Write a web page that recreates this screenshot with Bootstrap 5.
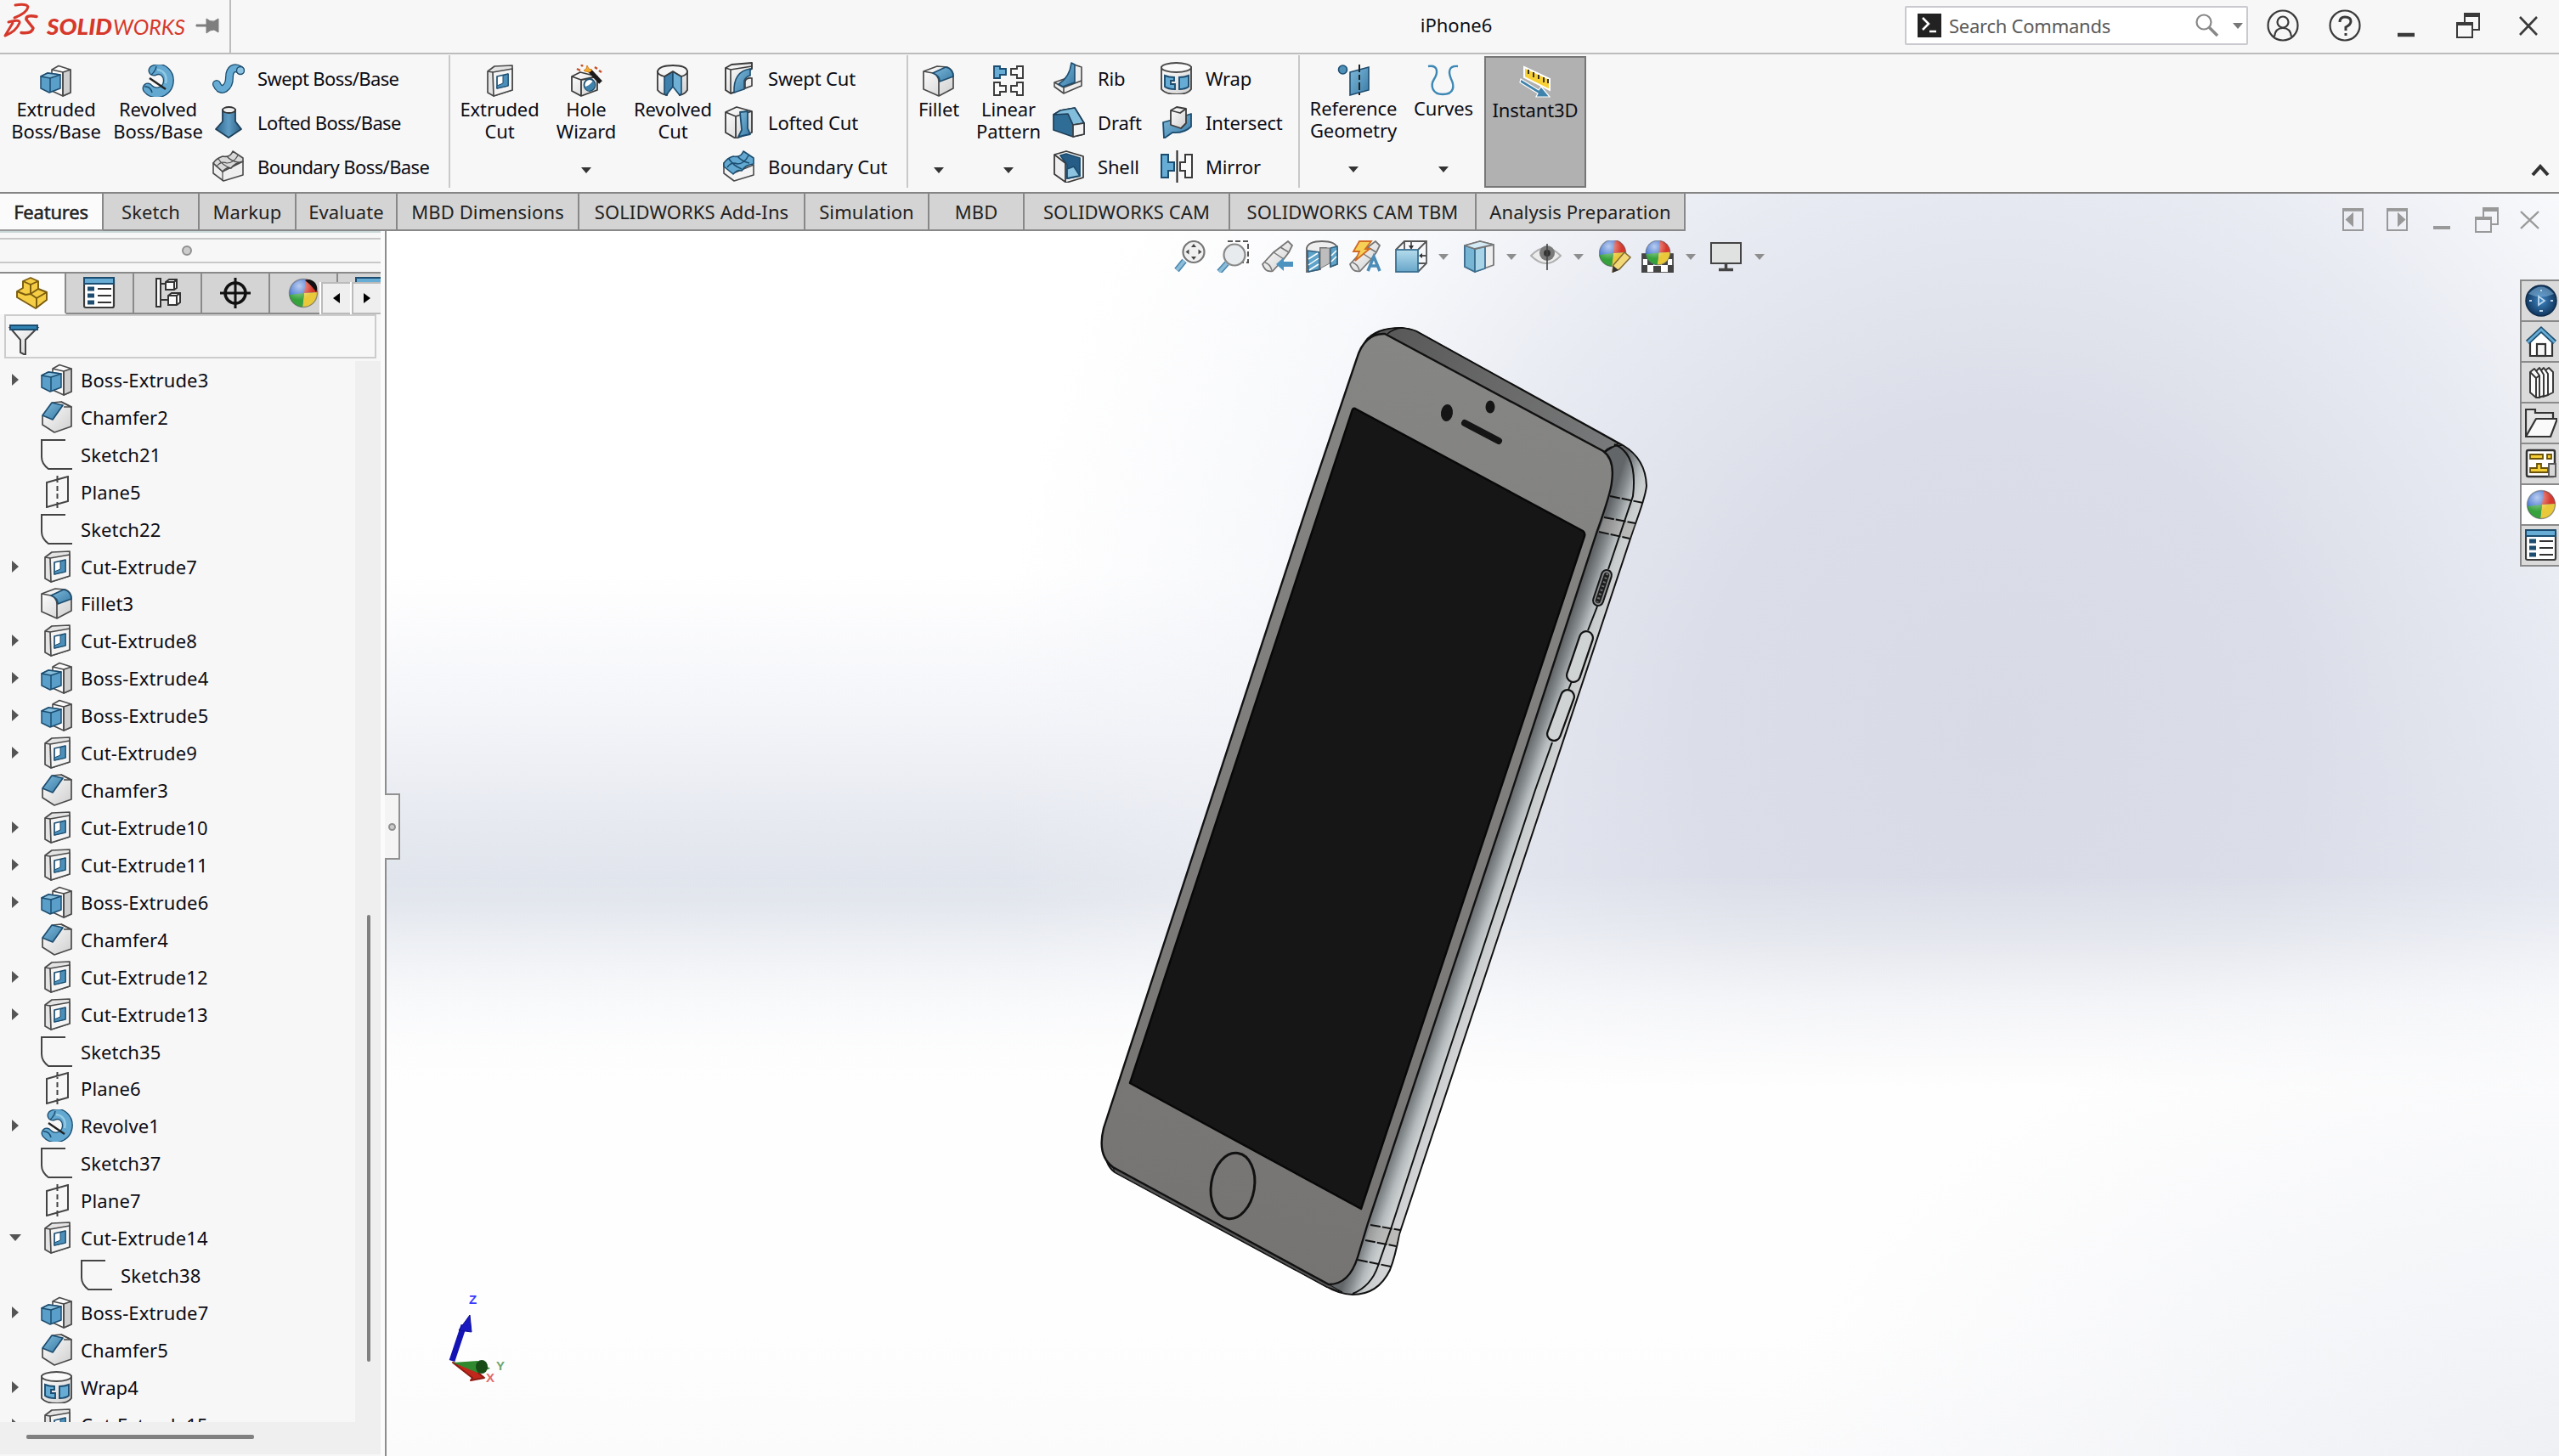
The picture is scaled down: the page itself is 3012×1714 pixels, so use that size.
<!DOCTYPE html>
<html lang="en">
<head>
<meta charset="utf-8">
<title>iPhone6 - SOLIDWORKS</title>
<link href="https://cdn.jsdelivr.net/npm/bootstrap@5.3.0/dist/css/bootstrap.min.css" rel="stylesheet">
<style>
html,body{height:100%}
body{font-family:"Noto Sans","Open Sans",sans-serif;font-size:22px;line-height:26px;color:#0c0c14;background:#f7f7f7;overflow:hidden}
svg{display:block;flex:none}
.ico{width:38px;height:38px}
.titlebar{height:64px;border-bottom:2px solid #bcbcbc;background:#f7f7f7}
.brand{width:272px;border-right:2px solid #bcbcbc}
.searchbox{width:404px;height:46px;border:2px solid #c9c9cf;background:#fff;color:#5a5a5a;border-radius:2px;letter-spacing:-.25px}
.ribbon{height:162px;background:#f7f7f7}
.rgroup{border-right:2px solid #c9c9c9;height:156px;margin-top:1px}
.big{padding-top:11px;text-align:center;white-space:nowrap;letter-spacing:-.1px}
.big .lbl{height:52px;margin-top:1px}
.big .ico{margin:0 auto}
.tri{width:0;height:0;border:6px solid transparent;border-top:7px solid #333;border-bottom:0}
.big .tri{margin:30px auto 0}
.stackcol{padding-top:1px;letter-spacing:-.15px}
.stackcol.tight{letter-spacing:-.6px}
.stackcol>div{height:52px;gap:15px;white-space:nowrap}
.stackcol span{margin-top:-1px}
.pressed{background:#b1b1b1;border:2px solid #777;height:155px;padding-top:9px;margin-top:2px;width:120px}
.workspace{height:1488px;border-top:2px solid #858585}
.cmdtabs{height:44px;position:absolute;left:0;top:0;z-index:3}
.cmdtabs>div{background:#d4d4d4;border-right:2px solid #888;border-bottom:2px solid #888;text-align:center;line-height:42px;white-space:nowrap;overflow:hidden;color:#222;letter-spacing:.12px}
.cmdtabs>.on{background:#fbfbfb;border-bottom-color:#999;-webkit-text-stroke:.5px #222;letter-spacing:-.2px}
.side{width:448px;background:#f7f7f7;margin-top:44px}
.grip{height:40px;border-top:2px solid #c9d6d8;padding-top:6px}
.grip>div{height:30px;border:2px solid #c8c8c8;border-left:0;border-right:0;padding-right:8px}
.gripgap{height:8px}
.dotg{width:12px;height:12px;border-radius:50%;border:2px solid #909090;background:#ccc}
.dotg.tiny{width:9px;height:9px}
.ptabs{height:50px;border-top:2px solid #8a8a8a}
.ptabs .pt{flex:none;width:80px;background:#d4d4d4;border-right:2px solid #8a8a8a;border-bottom:2px solid #8a8a8a;padding-top:4px}
.ptabs .pt .ico{margin:0 auto}
.ptabs .on{width:78px;background:#fcfcfc;border-bottom-color:#fcfcfc}
.arrows{right:0;bottom:0;background:#fff;padding-left:2px;width:72px;height:38px;gap:2px}
.arrows>div{flex:1;border:2px solid #bbb;border-right:0;background:#efefef}
.filterbox{height:52px;width:438px;margin-left:5px;border:2px solid #ccc;padding:8px 0 0 3px}
.treewrap{padding-top:3px}
.tree{height:1249px;width:418px;overflow:hidden;letter-spacing:.12px}
.trow{height:43.93px;white-space:nowrap}
.tw{width:48px;padding-left:14px}
.openmark{margin-left:-3px}
.trow .ico{margin-right:9px}
.child{padding-left:47px}
.vbar{width:30px;background:#efefef;padding:652px 12px 0 14px}
.vbar>div{height:526px;background:#808080;border-radius:2px}
.hbar{height:38px;background:#efefef;padding:15px 0 0 31px}
.hbar>div{width:268px;height:5px;background:#808080;border-radius:2px}
.edgebar{width:7px;background:#fbfbfb;border-right:2px solid #8d8d8d;margin-top:44px}
.viewport{background:
 radial-gradient(ellipse 1000px 620px at 2620px 1520px,rgba(236,238,243,.9),rgba(255,255,255,0) 100%),
 linear-gradient(180deg,rgba(255,255,255,0) 0,rgba(255,255,255,0) 54%,rgba(255,255,255,.3) 59%,rgba(254,254,254,.7) 64%,#fefefe 71%,#fefefe 90%,#fbfbfc 100%),
 radial-gradient(ellipse 1180px 1250px at 1900px 640px,#d8dae6 0,#dbdee8 30%,rgba(228,231,240,.85) 55%,rgba(240,242,247,.5) 75%,rgba(255,255,255,0) 100%),
 linear-gradient(180deg,#fff 0,#fff 30%,#f4f5f9 41%,#e6e9f0 50%,#dfe3eb 56%,#eceff4 65%,#fff 74%,#fff 100%)}
.float{position:absolute}
.doctitle{top:16px;left:416px}
.searchpos{left:2242px;top:7px}
.searchbox .tri{border-top-color:#777}
.winbtns{left:2660px;top:0;color:#3a3a3a}
.scene3d{left:0;top:0}
.collapse-caret{left:2978px;top:128px}
.wrapcol{left:1366px}
.hud{left:926px;top:55px}
.hud .tri{border-width:6px;border-top:7px solid #8e8e8e;border-bottom:0}
.docbtns{left:2295px;top:10px;color:#999}
.taskpane{left:2511px;top:101px;width:46px;border:2px solid #8a8a8a;border-right:0;background:#dadada}
.taskpane>div{height:48px;border-bottom:2px solid #8a8a8a;padding:4px 0 0 4px}
.taskpane>div:last-child{border-bottom:0;height:46px}
.handle{left:-2px;top:706px;width:18px;height:78px;background:#f4f4f4;border:2px solid #909090;border-left:0}
</style>
<script src="https://cdn.jsdelivr.net/npm/bootstrap@5.3.0/dist/js/bootstrap.bundle.min.js"></script>
</head>
<body>
<svg width="0" height="0" class="position-absolute">
<defs>
<linearGradient id="bl" x1="0" y1="0" x2="1" y2="1"><stop offset="0" stop-color="#7fbadb"/><stop offset="1" stop-color="#3a7ba6"/></linearGradient>
<linearGradient id="db" x1="0" y1="0" x2="1" y2="0"><stop offset="0" stop-color="#2c648d"/><stop offset=".5" stop-color="#5f9cc4"/><stop offset="1" stop-color="#2c5f86"/></linearGradient>
<linearGradient id="gr" x1="0" y1="0" x2="1" y2="1"><stop offset="0" stop-color="#fff"/><stop offset="1" stop-color="#cfcfcf"/></linearGradient>
<linearGradient id="lb" x1="0" y1="0" x2="0" y2="1"><stop offset="0" stop-color="#b5dced"/><stop offset="1" stop-color="#67a6c9"/></linearGradient>
<radialGradient id="globe"><stop offset="0" stop-color="#3f86c4"/><stop offset="1" stop-color="#12385f"/></radialGradient>
<radialGradient id="shine" cx=".35" cy=".25"><stop offset="0" stop-color="#fff" stop-opacity=".65"/><stop offset="1" stop-color="#fff" stop-opacity="0"/></radialGradient>
</defs>
<symbol id="extrude" viewBox="0 0 38 38"><g stroke="#4a4a4a" stroke-width="1.6" stroke-linejoin="round"><path d="M14 6 22 1.500 36 6V33L27 37 14 31Z" fill="#fbfbfb"/><path d="M27 9 36 6V33L27 37Z" fill="#cfcfcf"/><path d="M14 6 27 9V37" fill="none"/></g><g stroke="#1c4d70" stroke-width="1.5" stroke-linejoin="round"><path d="M1 14 9 10 24 12V28L11 33 1 28Z" fill="#5a9fc9"/><path d="M1 14 9 10 24 12 12 16Z" fill="#86bedd"/><path d="M12 16V32" fill="none"/></g></symbol>
<symbol id="cut" viewBox="0 0 38 38"><g stroke="#4a4a4a" stroke-width="1.7" stroke-linejoin="round"><path d="M5 8 13 2 34 1V30L12 37 5 33Z" fill="#e4e4e4"/><path d="M11 9 34 5V30L12 37Z" fill="#f4f4f4"/><path d="M5 8 11 9" fill="none"/><path d="M16 14 29 11V25L16 28Z" fill="#fff" stroke="#1c4d70"/><path d="M23 13 29 11V25L16 28V25L23 22Z" fill="#4b90ba" stroke="#1c4d70" stroke-width="1"/></g></symbol>
<symbol id="revolve" viewBox="0 0 38 38"><path d="M14 7C25 2 33 12 31 22 29 33 14 37 7 28" fill="none" stroke="#1c4d70" stroke-width="13" stroke-linecap="round"/><path d="M14 7C25 2 33 12 31 22 29 33 14 37 7 28" fill="none" stroke="#62a8d0" stroke-width="10.300" stroke-linecap="round"/><path d="M18 6C27 7 30 14 28 22" fill="none" stroke="#93c9e4" stroke-width="2.500"/><path d="M11 12Q16 8 17 2M3 26Q10 25 12 33" fill="none" stroke="#1c4d70" stroke-width="1.5"/><path d="M9 16 28 29" stroke="#222" stroke-width="2.4"/></symbol>
<symbol id="sweep" viewBox="0 0 38 38"><path d="M5 26C10 38 20 30 20 18 20 8 26 5 32 9" fill="none" stroke="#1c4d70" stroke-width="10" stroke-linecap="round"/><path d="M5 26C10 38 20 30 20 18 20 8 26 5 32 9" fill="none" stroke="#66acd4" stroke-width="7.4" stroke-linecap="round"/><circle cx="33" cy="10" r="4.5" fill="#8cc3e0" stroke="#1c4d70" stroke-width="1.4"/></symbol>
<symbol id="loft" viewBox="0 0 38 38"><path d="M12 4V18L4 27 19 37 34 27 27 18V4Z" fill="url(#db)" stroke="#1d3f58" stroke-width="1.8" stroke-linejoin="round"/><ellipse cx="19.500" cy="4.500" rx="7.500" ry="3.500" fill="#eee" stroke="#333" stroke-width="1.8"/></symbol>
<symbol id="boundary" viewBox="0 0 38 38"><g stroke="#4a4a4a" stroke-width="1.6" stroke-linejoin="round"><path d="M1 15 12 25 36 13V29L13 36 1 27Z" fill="#efefef"/><path d="M1 15Q5 9 12 7 21 9 24 1L36 9V13Q26 15 22 21 17 19 12 25Z" fill="#d9d9d9"/><path d="M12 25V36M7 10Q12 18 22 21M17 7Q22 13 31 14M5 19Q10 12 17 15 25 15 30 6" fill="none" stroke-width="1.200"/></g></symbol>
<symbol id="boundarycut" viewBox="0 0 38 38"><g stroke="#4a4a4a" stroke-width="1.6" stroke-linejoin="round"><path d="M1 15 12 27 36 17V29L13 36 1 27Z" fill="#f4f4f4"/><path d="M1 15Q5 9 12 7 21 9 24 1L36 9V16Q26 17 22 24 17 22 12 28L1 19Z" fill="#62a8d0" stroke="#1c4d70"/><path d="M7 10Q12 18 22 22M17 7Q22 13 31 15M5 20Q10 13 17 16 25 16 30 6" fill="none" stroke="#1c4d70" stroke-width="1.500"/></g></symbol>
<symbol id="hole" viewBox="0 0 38 38"><g stroke="#3b3b3b" stroke-width="1.8" stroke-linejoin="round"><path d="M2 14 12 9 32 14V30L13 37 2 31Z" fill="url(#gr)"/><path d="M2 14 13 18 32 14M13 18V37" fill="none"/></g><ellipse cx="23" cy="24" rx="6.500" ry="7" fill="#fff" stroke="#1c4d70" stroke-width="1.800"/><path d="M27 19Q22 26 17 26 19 31 23 31 29 29 29 23Z" fill="#3f82ac"/><path d="M23 7 36 21" stroke="#1b1b1b" stroke-width="5"/><path d="M20 1 22 5 26 6 23 9 18 8 16 7 19 5Z" fill="#f0ad2e" stroke="#d8811d"/><path d="M8 5 12 7M29 3 32 5M13 0 15 2M34 7 37 9" stroke="#c3502a" stroke-width="2.500"/></symbol>
<symbol id="revcut" viewBox="0 0 38 38"><path d="M1 8V30Q5 35 12 36L19 14 27 36Q33 35 36 30V8Z" fill="url(#gr)" stroke="#3b3b3b" stroke-width="1.800"/><path d="M9 14 19 8V26L11 36 9 34Z" fill="#3f7fab" stroke="#1c4d70" stroke-width="1.600"/><path d="M19 8 29 14V34L27 36 19 26Z" fill="#6fb0d6" stroke="#1c4d70" stroke-width="1.600"/><path d="M9 14Q1 12 1 8 3 1 19 1 35 1 36 8 36 12 29 14L19 8Z" fill="#f5f5f5" stroke="#3b3b3b" stroke-width="1.800"/></symbol>
<symbol id="sweptcut" viewBox="0 0 38 38"><path d="M3 7 10 3 34 1V8Q22 12 15 35L9 37 3 33Z" fill="url(#gr)" stroke="#3b3b3b" stroke-width="1.900" stroke-linejoin="round"/><path d="M3 7 9 9 34 5M9 9V37" fill="none" stroke="#3b3b3b" stroke-width="1.600"/><path d="M32 8Q12 11 13 36L25 32V22Q27 17 32 16Z" fill="url(#bl)" stroke="#1c4d70" stroke-width="1.600"/><path d="M26 31V23Q27 18 34 19V28Z" fill="#eee" stroke="#3b3b3b" stroke-width="1.600"/></symbol>
<symbol id="loftcut" viewBox="0 0 38 38"><g stroke="#3b3b3b" stroke-width="1.800" stroke-linejoin="round"><path d="M3 7 16 1 34 6V31L15 38 3 31Z" fill="url(#gr)"/><path d="M3 7 15 12 34 6M15 12V38" fill="none"/><path d="M20 7 29 6V26L32 33 18 36 22 28Z" fill="url(#bl)" stroke="#1c4d70"/></g></symbol>
<symbol id="fillet" viewBox="0 0 38 38"><g stroke="#4a4a4a" stroke-width="1.700" stroke-linejoin="round"><path d="M1 8 17 2 29 3Q36 6 36 14V28L19 37 1 29Z" fill="url(#gr)"/><path d="M1 8 12 10Q19 13 19 20V37" fill="none"/><path d="M12 10 27 3Q36 5 36 14L20 20Q20 13 12 10Z" fill="url(#bl)" stroke="#1c4d70"/></g></symbol>
<symbol id="chamfer" viewBox="0 0 38 38"><g stroke="#4a4a4a" stroke-width="1.700" stroke-linejoin="round"><path d="M2 18 14 2 24 1 36 7V30L16 37 2 28Z" fill="url(#gr)"/><path d="M24 1 36 7 27 7" fill="none"/><path d="M2 17 13 2 26 5 14 22Z" fill="url(#bl)" stroke="#1c4d70"/></g></symbol>
<symbol id="sketch" viewBox="0 0 38 38"><path d="M29 2H1V22Q1 30 9 36H37" fill="none" stroke="#444" stroke-width="2"/></symbol>
<symbol id="plane" viewBox="0 0 38 38"><path d="M7 8 32 1V30L7 37ZM19.500 0V8M19.500 12V18M19.500 21V27M19.500 31V38" fill="none" stroke="#444" stroke-width="2"/></symbol>
<symbol id="linpat" viewBox="0 0 38 38"><g fill="#fafafa" stroke="#3a3a3a" stroke-width="1.900"><path d="M2 2H9V5H16V12H9V16H2Z" fill="#66acd4" stroke="#1c4d70"/><path d="M36 2H29V5H22V12H29V16H36Z"/><path d="M2 21H9V25H16V32H9V36H2Z"/><path d="M36 21H29V25H22V32H29V36H36Z"/></g></symbol>
<symbol id="rib" viewBox="0 0 38 38"><g stroke-width="1.600" stroke-linejoin="round"><path d="M25 3 34 6V28L13 37 2 29 2 24 22 17Z" fill="#eee" stroke="#4a4a4a"/><path d="M2 24 13 30 34 22M13 30V37" fill="none" stroke="#4a4a4a"/><path d="M22 1 26 3V24L12 29 7 26Q20 18 22 1Z" fill="url(#bl)" stroke="#1c4d70"/></g></symbol>
<symbol id="draft" viewBox="0 0 38 38"><g stroke="#1d3f58" stroke-width="1.700" stroke-linejoin="round"><path d="M1 10 9 5 26 2 37 20V33L24 36 1 28Z" fill="#2f6d97"/><path d="M1 10 9 5 26 2 37 20 24 22 18 9Z" fill="#83bddc"/><path d="M24 22 37 20V33L24 36Z" fill="#f3f3f3" stroke="#3b3b3b"/></g></symbol>
<symbol id="shell" viewBox="0 0 38 38"><g stroke="#3b3b3b" stroke-width="1.800" stroke-linejoin="round"><path d="M2 5 16 1 36 7V32L16 38 2 28Z" fill="#f0f0f0"/><path d="M9 6 16 4 32 9V30L17 33V17Z" fill="#255d86" stroke="#1c4d70"/><path d="M17 33V22L25 19 32 30Z" fill="#8cc3e0" stroke="#1c4d70"/><path d="M2 5 15 15V38" fill="none"/></g></symbol>
<symbol id="wrap" viewBox="0 0 38 38"><path d="M1 6V32Q6 38 19 38 32 38 36 32V6Z" fill="url(#gr)" stroke="#4a4a4a" stroke-width="1.900"/><ellipse cx="18.500" cy="6.500" rx="17.500" ry="5.500" fill="#fafafa" stroke="#4a4a4a" stroke-width="1.900"/><path d="M5 16Q10 18 16 18V22H12V26H17V32Q9 32 5 29ZM22 18Q28 18 33 16V29Q29 32 22 32Z" fill="#66acd4" stroke="#1c4d70" stroke-width="1.900"/></symbol>
<symbol id="intersect" viewBox="0 0 38 38"><g stroke-width="1.800" stroke-linejoin="round"><path d="M3 19 14 16 36 9V24Q28 32 14 31L4 38Z" fill="url(#bl)" stroke="#1c4d70"/><path d="M12 5 19 1 30 3V20L24 26 12 22Z" fill="url(#gr)" stroke="#3b3b3b"/><path d="M12 5 23 8 30 3" fill="none" stroke="#3b3b3b"/></g></symbol>
<symbol id="mirror" viewBox="0 0 38 38"><path d="M1 5H9V14H16V24H9V32H1Z" fill="#66acd4" stroke="#1c4d70" stroke-width="2"/><path d="M37 5H29V14H23V24H29V32H37Z" fill="#fafafa" stroke="#3a3a3a" stroke-width="2"/><path d="M19.500 0V38" stroke="#222" stroke-width="2"/></symbol>
<symbol id="refgeo" viewBox="0 0 38 38"><path d="M15 10 37 4V31L15 37Z" fill="url(#bl)" stroke="#1c4d70" stroke-width="1.600"/><path d="M26 1V37" stroke="#222" stroke-width="2" stroke-dasharray="9 3 6 3"/><circle cx="6.500" cy="7" r="5" fill="#4f90b9" stroke="#1c4d70" stroke-width="1.600"/></symbol>
<symbol id="curves" viewBox="0 0 38 38"><path d="M1 3C14 1 12 12 8 18 3 26 6 36 18 36 32 36 32 26 28 18 25 11 24 2 36 3" fill="none" stroke="#3d87b5" stroke-width="2.400"/></symbol>
<symbol id="instant" viewBox="0 0 38 38"><path d="M6 2 36 16V29L6 14Z" fill="#f7d038" stroke="#fff" stroke-width="2"/><path d="M11 5V10M17 8V14M23 11V16M29 14V20M34 16V21" stroke="#222" stroke-width="1.800"/><path d="M2 16 23 29 26 25 36 37 20 37 22 33 1 20Z" fill="#3f82ac" stroke="#fff" stroke-width="1.200"/></symbol>
<symbol id="glob4" viewBox="0 0 38 38"><circle cx="19" cy="19" r="16.500" fill="#3b6fd0"/><path d="M20 19 22 2.500A16.500 16.500 0 0 1 35.500 18Z" fill="#d8382c"/><path d="M20 19 35.500 18A16.500 16.500 0 0 1 18 35.500Z" fill="#e9c93a"/><path d="M20 19 2.500 21A16.500 16.500 0 0 0 18 35.500Z" fill="#36a23c"/><circle cx="19" cy="19" r="16.500" fill="url(#shine)" stroke="#5557" stroke-width="1.500"/></symbol>
<symbol id="dispman" viewBox="0 0 38 38"><use href="#glob4"/><path d="M21 4Q27 1 33 7 37 13 34 18 30 11 21 4Z" fill="#111"/></symbol>
<symbol id="proplist" viewBox="0 0 38 38"><rect x="1" y="1" width="35" height="35" rx="2" fill="#fff" stroke="#3b3b3b" stroke-width="2.200"/><rect x="1" y="1" width="35" height="7" fill="#66acd4" stroke="#1c4d70" stroke-width="2"/><path d="M5 14H13M5 22H13M5 30H13" stroke="#1c4d70" stroke-width="5"/><path d="M17 14H33M17 22H33M17 30H33" stroke="#333" stroke-width="2"/></symbol>
<symbol id="part" viewBox="0 0 38 38"><g stroke="#7b5c10" stroke-width="1.900" stroke-linejoin="round"><path d="M1 17 8 13V5L17 1 26 5V14L36 18V27L23 37 1 24Z" fill="#f5ce45"/><path d="M8 5 17 9 26 5M17 9V20L26 14M1 17 11 21 17 20 24 25 36 18M24 25V37" fill="none"/></g></symbol>
<symbol id="config" viewBox="0 0 38 38"><g fill="#fafafa" stroke="#333" stroke-width="2"><path d="M6 2H11V35H6ZM11 8H20M11 27H22"/><path d="M17 6 21 3H30V13L27 15H17ZM20 22 24 19H34V30L30 33H20Z"/><path d="M17 6H27V15M27 6 30 3M20 22H30V33M30 22 34 19" fill="none"/></g></symbol>
<symbol id="target" viewBox="0 0 38 38"><circle cx="19" cy="19" r="12" fill="none" stroke="#111" stroke-width="3.500"/><path d="M19 1V37M1 19H37" stroke="#111" stroke-width="3"/></symbol>
<symbol id="funnel" viewBox="0 0 38 38"><path d="M2 6 14 20V35L20 38V20L34 6Z" fill="url(#gr)" stroke="#444" stroke-width="2"/><path d="M2 3H34V8H2Z" fill="#2f83b3" stroke="#1c4d70" stroke-width="2"/></symbol>
<symbol id="zoomfit" viewBox="0 0 38 38"><path d="M13 24 4 35" stroke="#4785ac" stroke-width="7"/><path d="M13 24 4 35" stroke="#8bbcd8" stroke-width="4"/><circle cx="24" cy="13.500" r="12.500" fill="#f0f0f0" stroke="#777" stroke-width="2.200"/><path d="M24 4 27 8H21ZM24 23 27 19H21ZM14.500 13.500 18.500 10.500V16.500ZM33.500 13.500 29.500 10.500V16.500Z" fill="#444"/></symbol>
<symbol id="zoomarea" viewBox="0 0 38 38"><path d="M13 1H37V26H30" fill="none" stroke="#555" stroke-width="2" stroke-dasharray="6 3"/><path d="M12 27 3 37" stroke="#4785ac" stroke-width="7"/><path d="M12 27 3 37" stroke="#8bbcd8" stroke-width="4"/><circle cx="21" cy="17" r="12.500" fill="#e7ebed" stroke="#888" stroke-width="2.200"/></symbol>
<symbol id="scope" viewBox="0 0 38 38"><path d="M1 28 14 14 22 8 31 1 36 6 32 14 26 22 13 36Q4 38 1 28Z" fill="url(#gr)" stroke="#777" stroke-width="1.800"/><path d="M14 14 26 22M22 8 32 14M4 26Q10 28 12 35" fill="none" stroke="#777" stroke-width="1.500"/></symbol>
<symbol id="prevview" viewBox="0 0 38 38"><use href="#scope"/><path d="M17 28 26 20V25H37V31H26V36Z" fill="#4c93bf"/></symbol>
<symbol id="section" viewBox="0 0 38 38"><path d="M1 9Q3 1 19 1 35 1 37 9V28L29 31V12L24 9 17 9V34L1 37Z" fill="#eee" stroke="#666" stroke-width="1.800"/><path d="M2 12 16 14V34L3 37Z M29 9 37 7V28L29 31Z" fill="#5ea3ca" stroke="#34607d" stroke-width="1.600"/><path d="M3 22 14 15M3 29 15 21M4 35 15 28M30 18 36 12M30 25 36 19" stroke="#fff" stroke-width="1.500"/><path d="M17 9H28V27L17 33Z" fill="#bdbdbd" stroke="#777"/></symbol>
<symbol id="dynamic" viewBox="0 0 38 38"><use href="#scope"/><path d="M12 1H26L19 10H24L7 24 12 13H5Z" fill="#f6cf57" stroke="#d06a24" stroke-width="1.800"/><path d="M22 36 29 19 36 36M24.500 30H34" fill="none" stroke="#4c8db8" stroke-width="3.500"/></symbol>
<symbol id="orient" viewBox="0 0 38 38"><path d="M1 11 11 1H37V27L27 37M27 11 37 1M11 1V11M11 11V1M27 27H37M19 1V9M37 18H29" fill="none" stroke="#555" stroke-width="1.800"/><path d="M19 11 16 6H22ZM28 18 32 15V21Z" fill="#333"/><rect x="1" y="11" width="26" height="26" fill="url(#lb)" stroke="#3a6f91" stroke-width="1.800"/></symbol>
<symbol id="display" viewBox="0 0 38 38"><g stroke="#777" stroke-width="1.800" stroke-linejoin="round"><path d="M2 6 20 1 36 5V29L14 37 2 31Z" fill="#eee"/><path d="M2 6 14 10V37L2 31Z" fill="#78b4d3" stroke="#3a6f91"/><path d="M14 10 26 7V33L14 37Z" fill="#a9d4e8" stroke="#3a6f91"/><path d="M2 6 20 1 36 5 14 10Z" fill="#d4eaf4"/></g></symbol>
<symbol id="eye" viewBox="0 0 38 38"><path d="M1 18Q18 0 36 18 19 36 1 18Z" fill="#ececec" stroke="#b0b0b0" stroke-width="2"/><circle cx="20" cy="15" r="9" fill="#7a7a7a"/><circle cx="20" cy="15" r="4" fill="#333"/><path d="M20 4V35" stroke="#444" stroke-width="1.600"/></symbol>
<symbol id="appear" viewBox="0 0 38 38"><use href="#glob4" x="-2" y="-3" width="36" height="36"/><path d="M17 29 30 14 37 20 24 34 16 37Z" fill="#f2d877" stroke="#7e6a3a" stroke-width="1.500"/><path d="M17 30 23 35 16 38Z" fill="#333"/></symbol>
<symbol id="scene" viewBox="0 0 38 38"><path d="M1 16H37V38H1Z" fill="#fff" stroke="#333" stroke-width="1.600"/><path d="M1 16H8V22H1ZM30 16H37V22H30ZM7 22H14V29H7ZM24 22H31V29H24ZM0 29H7V38H0ZM14 30H23V38H14ZM31 29H38V38H31Z" fill="#444"/><use href="#glob4" x="3" y="-2" width="33" height="33"/></symbol>
<symbol id="monitor" viewBox="0 0 38 38"><rect x="1" y="3" width="35" height="24" fill="#dfe2e0" stroke="#444" stroke-width="2"/><path d="M18.500 27V34M10 34.500H27" stroke="#444" stroke-width="3.500"/></symbol>
<symbol id="tglobe" viewBox="0 0 38 38"><circle cx="19" cy="19" r="18" fill="url(#globe)" stroke="#0f2d4d" stroke-width="1.500"/><path d="M4 11Q19 -6 34 11 19 18 4 11Z" fill="#8fc1e8" opacity=".5"/><path d="M16 14 23 19 16 24ZM5 19H8M30 19H33M17 31H21M18 7H20" fill="none" stroke="#bcd7ee" stroke-width="1.800"/></symbol>
<symbol id="home" viewBox="0 0 38 38"><path d="M6 18V36H32V18L19 6Z" fill="#fff" stroke="#333" stroke-width="2.200"/><rect x="14" y="22" width="10" height="14" fill="#f5f5f5" stroke="#333" stroke-width="2.200"/><path d="M3 20 19 5 35 20" fill="none" stroke="#1c4d70" stroke-width="6"/><path d="M3 20 19 5 35 20" fill="none" stroke="#66acd4" stroke-width="2.800"/></symbol>
<symbol id="books" viewBox="0 0 38 38"><g fill="#fafafa" stroke="#333" stroke-width="1.900" stroke-linejoin="round"><path d="M21 7 28 2 33 7V31L27 34Z"/><path d="M16 8 22 2 27 9V34L21 36Z"/><path d="M11 8 17 2 22 10V35L16 37Z"/><path d="M6 7 11 3 17 11V37L13 37 6 31Z"/><path d="M6 7 13 14 17 11M13 14V37" fill="none"/></g></symbol>
<symbol id="folder" viewBox="0 0 38 38"><path d="M1 35V3H12V7H33V14" fill="#e3e3e3" stroke="#333" stroke-width="2.200"/><path d="M1 35 13 14H38L30 35Z" fill="#fafafa" stroke="#333" stroke-width="2.200" stroke-linejoin="round"/></symbol>
<symbol id="palette" viewBox="0 0 38 38"><rect x="2" y="3" width="33" height="31" rx="2" fill="#fff" stroke="#333" stroke-width="2.500"/><path d="M6 8H21V13H6ZM26 8H31V13H26ZM14 19H19V24H27V29H6V24H14Z" fill="#f5cf35" stroke="#6b5309" stroke-width="1.800"/><path d="M28 34V19H36V34Z" fill="#d8d8d8" stroke="#555" stroke-width="1.800"/></symbol>
<symbol id="restore" viewBox="0 0 30 30"><path d="M11 2V1H28V20H20M11 1V12" fill="none" stroke="currentColor" stroke-width="2"/><path d="M10 3H29" stroke="currentColor" stroke-width="4"/><rect x="2" y="12" width="18" height="17" fill="none" stroke="currentColor" stroke-width="2"/><path d="M1 13H21" stroke="currentColor" stroke-width="4"/></symbol>
</svg>

<header class="titlebar d-flex align-items-stretch position-relative">
  <div class="brand">
    <svg width="270" height="62" viewBox="0 0 270 62"><g fill="none" stroke="#d6382b" stroke-linecap="round" stroke-linejoin="round"><path d="M18 6Q31 4 33 8 32 15 17 21" stroke-width="3"/><path d="M10 26Q24 22 23 27 19 37 6 42L15 27" stroke-width="3"/><path d="M43 19.500Q30 17 31 23L39 33Q38 40 25 38.500" stroke-width="3.500"/></g>
    <g fill="#d6382b" font-family="Lato,'Open Sans',sans-serif" font-size="26" font-style="italic"><text x="55" y="40.500" font-weight="900" textLength="77" lengthAdjust="spacingAndGlyphs">SOLID</text><text x="133" y="40.500" textLength="85" lengthAdjust="spacingAndGlyphs">WORKS</text></g>
    <path d="M231 29H243V22Q247 26 252 25L257 22V38L252 35Q247 35 243 39V31H231Z" fill="#7e7e7e" stroke="#7e7e7e"/></svg>
  </div>
  <div class="float doctitle end-0 text-center">iPhone6</div>
  <div class="float searchpos d-flex align-items-center">
    <div class="searchbox d-flex align-items-center ps-2">
      <svg width="30" height="30" class="ms-1"><rect x="1" y="1" width="28" height="28" fill="#222"/><path d="M7 6 14 13 7 20M15 22H23" fill="none" stroke="#fff" stroke-width="2.500"/></svg>
      <span class="ms-2">Search Commands</span>
      <svg width="28" height="28" class="ms-auto me-3"><circle cx="10" cy="10" r="8.500" fill="none" stroke="#888" stroke-width="2.200"/><path d="M16 16 26 26" stroke="#888" stroke-width="3.500"/></svg>
      <div class="tri me-1"></div>
    </div>
  </div>
  <svg class="float winbtns" width="352" height="62"><g fill="none" stroke="#3a3a3a" stroke-width="2.200"><circle cx="27" cy="30" r="17.500"/><circle cx="27" cy="26" r="6.500"/><path d="M17 43Q18 33 27 33 36 33 37 43"/><circle cx="100" cy="30" r="17.500"/><path d="M94 26Q94 20 100 20 107 20 107 25 107 29 101 32V36M101 39V42" stroke-width="3"/><path d="M162 41H182" stroke-width="4.500"/><path d="M306 20 326 41M326 20 306 41" stroke-width="2.600"/></g><use href="#restore" x="230" y="15" width="30" height="30"/></svg>
</header>

<section class="ribbon d-flex align-items-start position-relative" id="ribbon"></section>

<main class="workspace d-flex position-relative">
  <nav class="cmdtabs d-flex" id="tabs"></nav>
  <aside class="side">
    <div class="grip"><div class="d-flex justify-content-center align-items-center"><span class="dotg"></span></div></div>
    <div class="gripgap"></div>
    <div class="ptabs d-flex position-relative overflow-hidden">
      <div class="pt on"><svg class="ico"><use href="#part"/></svg></div>
      <div class="pt"><svg class="ico"><use href="#proplist"/></svg></div>
      <div class="pt"><svg class="ico"><use href="#config"/></svg></div>
      <div class="pt"><svg class="ico"><use href="#target"/></svg></div>
      <div class="pt"><svg class="ico"><use href="#dispman"/></svg></div>
      <div class="pt"><svg class="ico"><use href="#proplist"/></svg></div>
      <div class="arrows float d-flex"><div class="d-flex align-items-center justify-content-center"><svg width="8" height="12"><path d="M8 0V12L0 6Z"/></svg></div><div class="d-flex align-items-center justify-content-center"><svg width="8" height="12"><path d="M0 0V12L8 6Z"/></svg></div></div>
    </div>
    <div class="filterbox"><svg class="ico"><use href="#funnel"/></svg></div>
    <div class="treewrap d-flex"><div class="tree" id="tree"></div><div class="vbar"><div></div></div></div>
    <div class="hbar"><div></div></div>
  </aside>
  <div class="edgebar"></div>
  <section class="viewport flex-grow-1 position-relative">
    <svg class="float scene3d" width="2557" height="1486" viewBox="455 228 2557 1486">
      <defs>
        <linearGradient id="face" gradientUnits="userSpaceOnUse" x1="1740" y1="400" x2="1440" y2="1500"><stop offset="0" stop-color="#868685"/><stop offset="1" stop-color="#767472"/></linearGradient>
        <linearGradient id="rim" gradientUnits="userSpaceOnUse" x1="1752" y1="1010" x2="1790" y2="1023"><stop offset="0" stop-color="#626669"/><stop offset=".25" stop-color="#868b8e"/><stop offset=".5" stop-color="#b4babc"/><stop offset=".7" stop-color="#c9cdce"/><stop offset="1" stop-color="#d2d3d4"/></linearGradient>
        <linearGradient id="topr" gradientUnits="userSpaceOnUse" x1="1640" y1="390" x2="1910" y2="530"><stop offset="0" stop-color="#595959"/><stop offset="1" stop-color="#7a7b7c"/></linearGradient>
      </defs>
      <path d="M1607 402Q1618 386 1650 386 1660 387 1667 390L1910 524Q1937 540 1938 572 1937 584 1923 622L1647 1453Q1642 1480 1636 1495 1622 1524 1592 1524 1575 1523 1562 1515L1312 1380Q1300 1372 1299 1345L1345 1225 1607 425Z" fill="url(#rim)" stroke="#111" stroke-width="2"/>
      <path d="M1615 396Q1625 386 1650 386 1660 387 1667 390L1905 522 1888 533 1630 393Z" fill="url(#topr)" stroke="#111" stroke-width="1.500"/>
      <path d="M1310 1374 1564 1512 1580 1521 1562 1515 1312 1380Z" fill="#555" stroke="#111"/>
      <path d="M1888 609 1925 616 1918 634 1882 626ZM1613 1442 1648 1448 1643 1467 1607 1460Z" fill="#a9a8a4" opacity=".55"/>
      <g fill="none" stroke="#111" stroke-width="2">
        <path d="M1900 523Q1928 534 1922 584L1893 670M1880 714 1869 742M1852 797 1846 812M1827 874 1807 930 1699 1257 1637 1447 1622 1490Q1614 1514 1592 1523"/>
        <path d="M1895 584 1934 592M1888 609 1925 616M1882 626 1918 634M1613 1442 1648 1448M1607 1460 1643 1467M1598 1483 1637 1491" stroke-dasharray="12 2"/>
        <path d="M1633 393Q1640 387 1650 386M1888 532Q1893 525 1910 524" stroke-width="1.500"/>
      </g>
      <path d="M1630 393 1887 531Q1901 541 1897 568 1896 580 1880 625L1780 930 1610 1440 1598 1480Q1588 1512 1564 1512L1310 1374Q1291 1360 1299 1328L1540 591 1597 422Q1606 392 1630 393Z" fill="url(#face)" stroke="#111" stroke-width="2.400"/>
      <path d="M1595 481 1863 625Q1866 627 1865 631L1602 1423 1330 1275 1591 485Q1592 480 1595 481Z" fill="#161616" stroke="#080808" stroke-width="2.500" stroke-linejoin="round"/>
      <ellipse cx="1703" cy="486" rx="7" ry="10" transform="rotate(8 1703 486)" fill="#151515"/><ellipse cx="1754" cy="479" rx="5.500" ry="7.500" fill="#151515"/>
      <path d="M1724 498 1764 519" stroke="#151515" stroke-width="8" stroke-linecap="round"/>
      <ellipse cx="1451" cy="1396" rx="25.500" ry="39" transform="rotate(9 1451 1396)" fill="none" stroke="#111" stroke-width="3"/>
      <g stroke-linecap="round" fill="none"><path d="M1867 751 1852 795M1845 820 1829 864" stroke="#111" stroke-width="18"/><path d="M1867 751 1852 795M1845 820 1829 864" stroke="#d0d3d4" stroke-width="13.500"/><path d="M1891 677 1881 707" stroke="#161616" stroke-width="14"/><path d="M1891 677 1881 707" stroke="#8b8e90" stroke-width="10"/><path d="M1891 677 1881 707" stroke="#1d1d1d" stroke-width="6.500"/><path d="M1892 675 1880 709" stroke="#6c6f70" stroke-width="3" stroke-dasharray="2 3" stroke-linecap="butt"/></g>
      <g stroke-linejoin="round"><path d="M532 1602 546 1560" stroke="#1414b4" stroke-width="7"/><path d="M540 1566 553 1548 555 1568Z" fill="#1a1ac0" stroke="#0d0d94"/><path d="M533 1604 556 1622 554 1625 570 1622 556 1610Z" fill="#c0281c" stroke="#8f1b12" stroke-width="2"/><path d="M533 1604 562 1602 577 1611 562 1616Z" fill="#2f8a2f"/><ellipse cx="567" cy="1609" rx="7" ry="8" fill="#174c17"/></g>
      <g font-weight="700" font-size="15" font-family="'Liberation Sans',sans-serif"><text x="552" y="1535" fill="#3a3aff">Z</text><text x="584" y="1613" fill="#6fa86f">Y</text><text x="572" y="1627" fill="#e26a6a">X</text></g>
    </svg>
    <div class="hud float d-flex align-items-center" id="hud"></div>
    <svg class="float docbtns" width="262" height="44"><g fill="none" stroke="#999" stroke-width="2"><rect x="8" y="8" width="23" height="25"/><path d="M7 9H32" stroke-width="3.500"/><path d="M19 14V27L12 20.500Z" fill="#999"/><rect x="60" y="8" width="23" height="25"/><path d="M59 9H84" stroke-width="3.500"/><path d="M73 14V27L80 20.500Z" fill="#999"/><path d="M114 30H134" stroke-width="4"/><path d="M217 11 238 31M238 11 217 31" stroke-width="2.400"/></g><use href="#restore" x="162" y="6" width="30" height="30"/></svg>
    <div class="taskpane float">
      <div><svg class="ico"><use href="#tglobe"/></svg></div><div><svg class="ico"><use href="#home"/></svg></div><div><svg class="ico"><use href="#books"/></svg></div><div><svg class="ico"><use href="#folder"/></svg></div><div><svg class="ico"><use href="#palette"/></svg></div><div class="bg-white"><svg class="ico"><use href="#glob4"/></svg></div><div><svg class="ico"><use href="#proplist"/></svg></div>
    </div>
    <div class="handle float d-flex align-items-center justify-content-center"><span class="dotg tiny"></span></div>
  </section>
</main>
<script>
const ico=n=>`<svg class="ico"><use href="#${n}"/></svg>`;
const big=(n,t,w,tri)=>`<div class="big" style="width:${w}px">${ico(n)}<div class="lbl">${t}</div>${tri?'<div class="tri"></div>':''}</div>`;
const col=(ml,items,cls='')=>`<div class="stackcol ${cls}" style="margin-left:${ml}px">`+items.map(i=>`<div class="d-flex align-items-center">${ico(i[0])}<span>${i[1]}</span></div>`).join('')+'</div>';
const group=(w,pl,h)=>`<div class="rgroup d-flex" style="width:${w}px;padding-left:${pl}px">${h}</div>`;
document.getElementById('ribbon').innerHTML=
 group(530,6,big('extrude','Extruded<br>Boss/Base',120)+big('revolve','Revolved<br>Boss/Base',120)+col(4,[['sweep','Swept Boss/Base'],['loft','Lofted Boss/Base'],['boundary','Boundary Boss/Base']],'tight'))+
 group(539,7,big('cut','Extruded<br>Cut',102)+big('hole','Hole<br>Wizard',102,1)+big('revcut','Revolved<br>Cut',102)+col(8,[['sweptcut','Swept Cut'],['loftcut','Lofted Cut'],['boundarycut','Boundary Cut']]))+
 group(461,0,big('fillet','Fillet',72,1)+big('linpat','Linear<br>Pattern',92,1)+col(6,[['rib','Rib'],['draft','Draft'],['shell','Shell']])+`<div class="float wrapcol">${col(0,[['wrap','Wrap'],['intersect','Intersect'],['mirror','Mirror']])}</div>`)+
 `<div class="d-flex" style="padding-left:5px">`+big('refgeo','Reference<br>Geometry',116,1)+big('curves','Curves',96,1)+`<div class="big pressed">${ico('instant')}<div class="lbl">Instant3D</div></div></div>`+
 `<svg class="float collapse-caret" width="24" height="18"><path d="M3 14 12 4 21 14" fill="none" stroke="#333" stroke-width="4"/></svg>`;
document.getElementById('tabs').innerHTML=[['Features',122],['Sketch',113],['Markup',114],['Evaluate',119],['MBD Dimensions',214],['SOLIDWORKS Add-Ins',266],['Simulation',146],['MBD',112],['SOLIDWORKS CAM',242],['SOLIDWORKS CAM TBM',290],['Analysis Preparation',246]].map((t,i)=>`<div class="${i?'':'on'}" style="width:${t[1]}px">${t[0]}</div>`).join('');
const kinds={B:['extrude','Boss-Extrude',1],C:['cut','Cut-Extrude',1],H:['chamfer','Chamfer',0],S:['sketch','Sketch',0],P:['plane','Plane',0],F:['fillet','Fillet',0],R:['revolve','Revolve',1],W:['wrap','Wrap',1]};
document.getElementById('tree').innerHTML='B3 H2 S21 P5 S22 C7 F3 C8 B4 B5 C9 H3 C10 C11 B6 H4 C12 C13 S35 P6 R1 S37 P7 C14 S38 B7 H5 W4 C15'.split(' ').map(s=>{const k=kinds[s[0]],n=s.slice(1);const open=s==='C14';
 return `<div class="trow d-flex align-items-center ${s==='S38'?'child':''}"><div class="tw">${k[2]?(open?'<svg class="openmark" width="14" height="9"><path d="M0 0H14L7 8Z" fill="#555"/></svg>':'<svg width="9" height="14"><path d="M0 0V14L8 7Z" fill="#555"/></svg>'):''}</div>${ico(k[0])}<span>${k[1]}${n}</span></div>`}).join('');
let x=1381,out='';
[['zoomfit',1381],['zoomarea',1432],['prevview',1485],['section',1537],['dynamic',1588],['orient',1642],[0,1693],['display',1722],[0,1773],['eye',1801],[0,1852],['appear',1882],['scene',1932],[0,1984],['monitor',2013],[0,2065]].forEach(([n,p])=>{out+=`<div style="margin-left:${p-x}px">${n?ico(n):'<div class="tri"></div>'}</div>`;x=p+(n?38:12)});
document.getElementById('hud').innerHTML=out;
</script>
</body>
</html>
